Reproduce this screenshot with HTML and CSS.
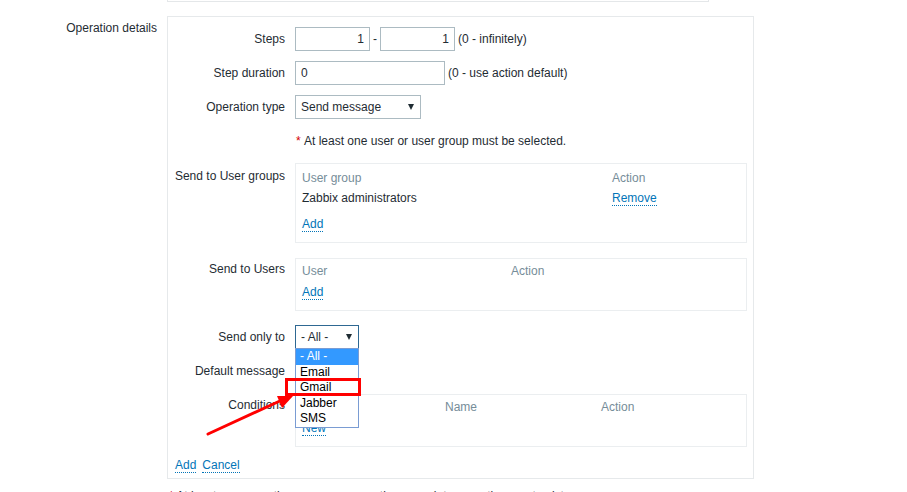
FILE: index.html
```html
<!DOCTYPE html>
<html>
<head>
<meta charset="utf-8">
<link rel="stylesheet" href="styles.css">
</head>
<body>
<div class="page">
  <div class="prev-box"></div>
  <div class="form-row">
    <div class="main-label">Operation details</div>
    <div class="ops-box">
      <div class="ops-rows">
        <div class="row">
          <div class="lbl">Steps</div>
          <div class="field">
            <input class="inp inp-num" value="1"><span class="dash">-</span><input class="inp inp-num" value="1"><span class="hint">(0 - infinitely)</span>
          </div>
        </div>
        <div class="row">
          <div class="lbl">Step duration</div>
          <div class="field">
            <input class="inp inp-wide" value="0"><span class="hint">(0 - use action default)</span>
          </div>
        </div>
        <div class="row">
          <div class="lbl">Operation type</div>
          <div class="field">
            <div class="sel sel-op"><span>Send message</span><span class="caret"></span></div>
          </div>
        </div>
        <div class="row">
          <div class="lbl"></div>
          <div class="field note"><span class="req">*</span>&nbsp;At least one user or user group must be selected.</div>
        </div>
        <div class="row">
          <div class="lbl lbl-top">Send to User groups</div>
          <div class="tbl tbl-groups">
            <div class="tbl-head cols-groups"><span>User group</span><span>Action</span></div>
            <div class="tbl-row cols-groups"><span>Zabbix administrators</span><span><a class="link">Remove</a></span></div>
            <div class="tbl-add tbl-add-groups"><a class="link">Add</a></div>
          </div>
        </div>
        <div class="row row-wide">
          <div class="lbl lbl-top2">Send to Users</div>
          <div class="tbl">
            <div class="tbl-head cols-users"><span>User</span><span>Action</span></div>
            <div class="tbl-add"><a class="link">Add</a></div>
          </div>
        </div>
        <div class="row row-wide2">
          <div class="lbl">Send only to</div>
          <div class="field">
            <div class="sel-wrap">
              <div class="sel sel-focus sel-small"><span>- All -</span><span class="caret"></span></div>
              <div class="dropdown">
                <div class="opt active">- All -</div>
                <div class="opt">Email</div>
                <div class="opt">Gmail</div>
                <div class="opt">Jabber</div>
                <div class="opt">SMS</div>
              </div>
            </div>
          </div>
        </div>
        <div class="row row-tight">
          <div class="lbl">Default message</div>
          <div class="field"><span class="checkbox"></span></div>
        </div>
        <div class="row row-cond">
          <div class="lbl lbl-top2">Conditions</div>
          <div class="tbl">
            <div class="tbl-head cols-cond"><span>Label</span><span>Name</span><span>Action</span></div>
            <div class="tbl-add"><a class="link">New</a></div>
          </div>
        </div>
      </div>
      <div class="actions"><a class="link">Add</a><a class="link">Cancel</a></div>
    </div>
  </div>
  <div class="footnote"><span class="req">*</span> At least one operation, recovery operation or update operation must exist.</div>

  <div class="annot-box"></div>
  <svg class="annot-arrow" width="907" height="492" viewBox="0 0 907 492">
    <line x1="208" y1="434" x2="282" y2="400" stroke="#f00" stroke-width="3" stroke-linecap="round"/>
    <polygon points="293,396 277,396 282,408" fill="#f00"/>
  </svg>
</div>
</body>
</html>
```

FILE: styles.css
```css
html, body {
  margin: 0;
  padding: 0;
  overflow: hidden;
  background: #fff;
}
body {
  font-family: "Liberation Sans", Arial, sans-serif;
  font-size: 12px;
  line-height: 14px;
  color: #1f2c33;
}
.page {
  position: relative;
  width: 907px;
  height: 492px;
  overflow: hidden;
}
.prev-box {
  margin-left: 167px;
  width: 540px;
  height: 1px;
  border: 1px solid #e4e7e9;
  border-top: none;
}
.form-row {
  display: grid;
  grid-template-columns: 157px 587px;
  column-gap: 10px;
  margin-top: 14px;
}
.main-label {
  text-align: right;
  padding-top: 5px;
}
.ops-box {
  box-sizing: border-box;
  border: 1px solid #e6e9eb;
  padding: 10px 6px 5px 0;
}
.ops-rows {
  display: flex;
  flex-direction: column;
  gap: 10px;
}
.row {
  display: grid;
  grid-template-columns: 117px 452px;
  column-gap: 10px;
}
.row-wide { margin-top: 5px; }
.row-wide2 { margin-top: 4px; }
.row-tight { margin-top: 0; }
.row-cond { margin-top: 1px; }
.lbl {
  text-align: right;
  line-height: 24px;
}
.lbl-top {
  line-height: 14px;
  padding-top: 6px;
}
.lbl-top2 {
  line-height: 14px;
  padding-top: 4px;
}
.field {
  display: flex;
  align-items: center;
  height: 24px;
}
.note { line-height: 24px; padding-left: 1px; }
.req { color: #d40000; }
.inp {
  box-sizing: border-box;
  height: 24px;
  border: 1px solid #acbbc2;
  padding: 0 5px;
  margin: 0;
  font: inherit;
  color: #1f2c33;
  background: #fff;
  outline: none;
}
.inp-num { width: 75px; text-align: right; }
.inp-wide { width: 150px; }
.dash { margin: 0 3px; }
.hint { margin-left: 3px; }
.sel {
  box-sizing: border-box;
  height: 24px;
  border: 1px solid #acbbc2;
  background: #fff;
  display: flex;
  align-items: center;
  justify-content: space-between;
  padding: 0 6px 0 5px;
}
.sel-op { width: 126px; }
.sel-small { width: 64px; }
.sel-focus { border-color: #2e6892; }
.caret {
  width: 0;
  height: 0;
  border-left: 3.5px solid transparent;
  border-right: 3.5px solid transparent;
  border-top: 6px solid #1f2c33;
}
.sel-wrap {
  position: relative;
  width: 64px;
}
.dropdown {
  position: absolute;
  left: 0;
  top: 23px;
  width: 64px;
  box-sizing: border-box;
  border: 1px solid #7a9cd3;
  background: #fff;
  z-index: 5;
}
.opt {
  height: 15.6px;
  line-height: 15px;
  padding-left: 4px;
  color: #000;
}
.opt.active {
  background: #3399ff;
  color: #fff;
}
.checkbox {
  display: inline-block;
  width: 12px;
  height: 12px;
  border: 1px solid #acbbc2;
}
.tbl {
  border: 1px solid #ebeef0;
  padding: 3px 6px 9px;
}
.tbl-groups { padding-top: 5px; }
.tbl-head {
  display: grid;
  color: #768d99;
  line-height: 18px;
}
.tbl-row {
  display: grid;
  line-height: 18px;
  margin-top: 2px;
}
.tbl-add {
  line-height: 18px;
  margin-top: 3px;
}
.tbl-add-groups { margin-top: 8px; }
.cols-groups { grid-template-columns: 310px 1fr; }
.cols-users { grid-template-columns: 209px 1fr; }
.cols-cond { grid-template-columns: 143px 156px 1fr; }
.link {
  color: #0275b8;
  text-decoration: none;
  border-bottom: 1px dotted #0275b8;
}
.actions {
  display: flex;
  gap: 6px;
  padding-top: 11px;
  padding-left: 7px;
  line-height: 14px;
}
.footnote {
  margin-left: 169px;
  margin-top: 10px;
  white-space: nowrap;
}
.annot-box {
  position: absolute;
  left: 285px;
  top: 378px;
  width: 76px;
  height: 18px;
  box-sizing: border-box;
  border: 3px solid #f00;
  z-index: 6;
}
.annot-arrow {
  position: absolute;
  left: 0;
  top: 0;
  z-index: 7;
  pointer-events: none;
}
```
